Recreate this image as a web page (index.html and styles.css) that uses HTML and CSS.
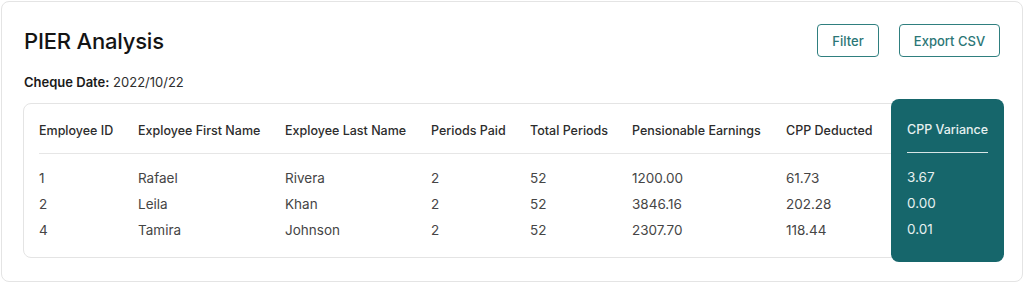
FILE: index.html
```html
<!DOCTYPE html>
<html>
<head>
<meta charset="utf-8">
<link rel="stylesheet" href="styles.css">
</head>
<body>
<div class="panel">
  <div class="panel-head">
    <h1 class="title">PIER Analysis</h1>
    <div class="actions">
      <button class="btn btn-filter">Filter</button>
      <button class="btn btn-export">Export CSV</button>
    </div>
  </div>
  <div class="meta"><span class="meta-label">Cheque Date:</span> 2022/10/22</div>
  <div class="table-card">
    <table class="data">
      <colgroup>
        <col class="c1"><col class="c2"><col class="c3"><col class="c4"><col class="c5"><col class="c6"><col class="c7">
      </colgroup>
      <thead>
        <tr><th>Employee ID</th><th>Exployee First Name</th><th>Exployee Last Name</th><th>Periods Paid</th><th>Total Periods</th><th>Pensionable Earnings</th><th>CPP Deducted</th></tr>
      </thead>
      <tbody>
        <tr class="first"><td>1</td><td>Rafael</td><td>Rivera</td><td>2</td><td>52</td><td>1200.00</td><td>61.73</td></tr>
        <tr><td>2</td><td>Leila</td><td>Khan</td><td>2</td><td>52</td><td>3846.16</td><td>202.28</td></tr>
        <tr class="last"><td>4</td><td>Tamira</td><td>Johnson</td><td>2</td><td>52</td><td>2307.70</td><td>118.44</td></tr>
      </tbody>
    </table>
    <div class="highlight">
      <div class="hl-head">CPP Variance</div>
      <div class="hl-body">
        <div class="hl-cell">3.67</div>
        <div class="hl-cell">0.00</div>
        <div class="hl-cell">0.01</div>
      </div>
    </div>
  </div>
</div>
</body>
</html>
```

FILE: styles.css
```css
* { box-sizing: border-box; }
html, body { margin: 0; padding: 0; background: #ffffff; }
body {
  font-family: Inter, "Noto Sans", "Liberation Sans", sans-serif;
  color: #3b3b3b;
  width: 1024px;
  height: 294px;
  overflow: hidden;
}
.panel {
  margin: 1px 1px 0 1px;
  height: 281px;
  border: 1px solid #e4e4e4;
  border-radius: 8px;
  padding: 22px 20px 0 21px;
}
.panel-head {
  display: flex;
  align-items: center;
  justify-content: space-between;
  height: 33px;
  padding-right: 2px;
}
.title {
  margin: 0;
  padding-left: 1px;
  font-size: 22px;
  font-weight: 500;
  color: #141414;
  letter-spacing: -0.2px;
}
.actions { display: flex; gap: 20px; }
.btn {
  height: 33px;
  border: 1px solid #2f7f7f;
  border-radius: 4px;
  background: #ffffff;
  color: #2b7676;
  font-family: inherit;
  font-size: 13px;
  font-weight: 500;
  padding: 0;
}
.btn-filter { width: 62px; }
.btn-export { width: 101px; }
.meta {
  margin-top: 17px;
  padding-left: 1px;
  font-size: 13px;
  line-height: 16px;
  color: #2e2e2e;
}
.meta-label { font-weight: 600; color: #1a1a1a; }
.table-card {
  margin-top: 13px;
  border: 1px solid #e4e4e4;
  border-radius: 8px;
  display: flex;
  padding-left: 15px;
}
.data {
  border-collapse: collapse;
  table-layout: fixed;
  width: 852px;
}
.c1 { width: 99px; }
.c2 { width: 147px; }
.c3 { width: 146px; }
.c4 { width: 99px; }
.c5 { width: 102px; }
.c6 { width: 154px; }
.c7 { width: 105px; }
.data th, .data td {
  text-align: left;
  padding: 0;
  white-space: nowrap;
}
.data th {
  font-size: 12.5px;
  font-weight: 500;
  color: #2c2c2c;
  line-height: 16px;
  padding: 19px 0 14px 0;
  border-bottom: 1px solid #e6e6e6;
}
.data td {
  font-size: 13.5px;
  line-height: 26px;
  color: #454545;
}
.data tr.first td { padding-top: 11px; }
.data tr.last td { padding-bottom: 14px; }
.highlight {
  width: 113px;
  margin: -5px -4px -5px 0;
  background: #16666b;
  border-radius: 8px;
  padding: 0 16px;
  color: #e6f0f0;
}
.hl-head {
  font-size: 12.5px;
  font-weight: 500;
  line-height: 16px;
  padding: 23px 0 14px 0;
  border-bottom: 1px solid #d8e6e6;
  white-space: nowrap;
}
.hl-body { padding-top: 11px; }
.hl-cell {
  font-size: 13.5px;
  line-height: 26px;
}
```
